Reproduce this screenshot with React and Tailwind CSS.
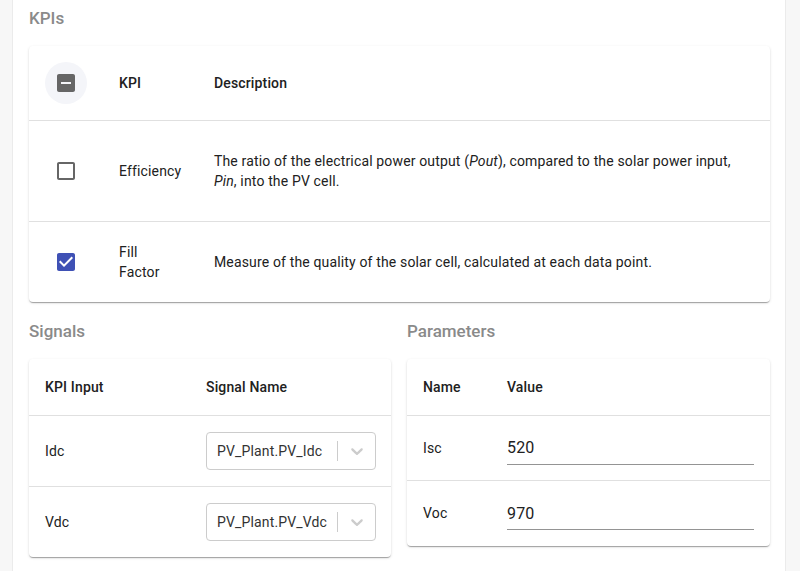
import React from "react";

const cardShadow =
  "shadow-[0_2px_1px_-1px_rgba(0,0,0,0.2),0_1px_1px_0_rgba(0,0,0,0.14),0_1px_3px_0_rgba(0,0,0,0.12)]";

function Icon({ d, color }) {
  return (
    <svg width="24" height="24" viewBox="0 0 24 24">
      <path d={d} fill={color} />
    </svg>
  );
}

function MinusBox() {
  return (
    <div className="w-[42px] h-[42px] rounded-full bg-[#f4f5f9] flex items-center justify-center">
      <Icon
        color="#666666"
        d="M19 3H5c-1.1 0-2 .9-2 2v14c0 1.1.9 2 2 2h14c1.1 0 2-.9 2-2V5c0-1.1-.9-2-2-2zm-2 10H7v-2h10v2z"
      />
    </div>
  );
}

function EmptyBox() {
  return (
    <div className="w-[42px] h-[42px] flex items-center justify-center">
      <Icon
        color="#666666"
        d="M19 5v14H5V5h14m0-2H5c-1.1 0-2 .9-2 2v14c0 1.1.9 2 2 2h14c1.1 0 2-.9 2-2V5c0-1.1-.9-2-2-2z"
      />
    </div>
  );
}

function CheckedBox() {
  return (
    <div className="w-[42px] h-[42px] flex items-center justify-center">
      <Icon
        color="#3f51b5"
        d="M19 3H5c-1.11 0-2 .9-2 2v14c0 1.1.89 2 2 2h14c1.11 0 2-.9 2-2V5c0-1.1-.89-2-2-2zm-9 14l-5-5 1.41-1.41L10 14.17l7.59-7.59L19 8l-9 9z"
      />
    </div>
  );
}

function Select({ value }) {
  return (
    <div className="h-[38px] w-full rounded-[4px] border border-[#cccccc] bg-white flex items-center">
      <div className="flex-1 pl-[10px] text-[14px] tracking-[0.01071em] text-[#333333]">{value}</div>
      <div className="w-px h-[20px] bg-[#cccccc]" />
      <div className="w-[37px] flex items-center justify-center">
        <svg width="20" height="20" viewBox="0 0 20 20">
          <path
            d="M4.516 7.548c0.436-0.446 1.043-0.481 1.576 0l3.908 3.747 3.908-3.747c0.533-0.481 1.141-0.446 1.574 0 0.436 0.445 0.408 1.197 0 1.615-0.406 0.418-4.695 4.502-4.695 4.502-0.217 0.223-0.502 0.335-0.787 0.335s-0.57-0.112-0.789-0.335c0 0-4.287-4.084-4.695-4.502s-0.436-1.17 0-1.615z"
            fill="#cccccc"
          />
        </svg>
      </div>
    </div>
  );
}

function Field({ value }) {
  return (
    <div className="h-[32px] w-full border-b border-[#949494] flex items-center">
      <span className="text-[16px] text-[#212121]">{value}</span>
    </div>
  );
}

export default function App() {
  return (
    <div
      className="flex w-[800px] h-[571px] overflow-hidden bg-white text-[#212121]"
      style={{ fontFamily: "Roboto, 'Noto Sans', sans-serif" }}
    >
      <div className="w-[13px] bg-[#f7f7f7] border-r border-[#ebebeb]" />
      <div className="w-[773px] bg-white border-r border-[#ebebeb] pl-4 pr-[15px] pt-[8px]">
        <div className="text-[17px] leading-[20px] font-medium text-[#8a8a8a]">KPIs</div>

        <div className={`mt-[18px] rounded-[4px] bg-white ${cardShadow}`}>
          {/* header */}
          <div className="flex items-center h-[75px] border-b border-[#e0e0e0] text-[14px] font-medium tracking-[0.01071em]">
            <div className="w-[74px] flex justify-center">
              <MinusBox />
            </div>
            <div className="w-[95px] px-4">KPI</div>
            <div className="flex-1 px-4">Description</div>
          </div>
          {/* row 1 */}
          <div className="flex items-center h-[101px] border-b border-[#e0e0e0] text-[14px] leading-[20px] tracking-[0.01071em]">
            <div className="w-[74px] flex justify-center">
              <EmptyBox />
            </div>
            <div className="w-[95px] px-4">Efficiency</div>
            <div className="flex-1 px-4">
              The ratio of the electrical power output (<i>Pout</i>), compared to the solar power input,
              <br />
              <i>Pin</i>, into the PV cell.
            </div>
          </div>
          {/* row 2 */}
          <div className="flex items-center h-[80px] text-[14px] leading-[20px] tracking-[0.01071em]">
            <div className="w-[74px] flex justify-center">
              <CheckedBox />
            </div>
            <div className="w-[95px] px-4">
              Fill
              <br />
              Factor
            </div>
            <div className="flex-1 px-4">
              Measure of the quality of the solar cell, calculated at each data point.
            </div>
          </div>
        </div>

        <div className="grid grid-cols-[362px_1fr] gap-[16px] mt-[19px]">
          <div>
            <div className="text-[17px] leading-[20px] font-medium text-[#8a8a8a]">Signals</div>
            <div className={`mt-[18px] rounded-[4px] bg-white ${cardShadow}`}>
              <div className="flex items-center h-[57px] border-b border-[#e0e0e0] text-[14px] font-medium tracking-[0.01071em]">
                <div className="w-[161px] px-4">KPI Input</div>
                <div className="flex-1 px-4">Signal Name</div>
              </div>
              <div className="flex items-center h-[71px] border-b border-[#e0e0e0] text-[14px] tracking-[0.01071em]">
                <div className="w-[161px] px-4">Idc</div>
                <div className="flex-1 pl-4 pr-[15px]">
                  <Select value="PV_Plant.PV_Idc" />
                </div>
              </div>
              <div className="flex items-center h-[70px] text-[14px] tracking-[0.01071em]">
                <div className="w-[161px] px-4">Vdc</div>
                <div className="flex-1 pl-4 pr-[15px]">
                  <Select value="PV_Plant.PV_Vdc" />
                </div>
              </div>
            </div>
          </div>
          <div>
            <div className="text-[17px] leading-[20px] font-medium text-[#8a8a8a]">Parameters</div>
            <div className={`mt-[18px] rounded-[4px] bg-white ${cardShadow}`}>
              <div className="flex items-center h-[57px] border-b border-[#e0e0e0] text-[14px] font-medium tracking-[0.01071em]">
                <div className="w-[84px] px-4">Name</div>
                <div className="flex-1 px-4">Value</div>
              </div>
              <div className="flex items-center h-[65px] border-b border-[#e0e0e0] text-[14px] tracking-[0.01071em]">
                <div className="w-[84px] px-4">Isc</div>
                <div className="flex-1 px-4 pt-[1px]">
                  <Field value="520" />
                </div>
              </div>
              <div className="flex items-center h-[65px] text-[14px] tracking-[0.01071em]">
                <div className="w-[84px] px-4">Voc</div>
                <div className="flex-1 px-4 pt-[1px]">
                  <Field value="970" />
                </div>
              </div>
            </div>
          </div>
        </div>
      </div>
      <div className="flex-1 bg-[#f7f7f7]" />
    </div>
  );
}
